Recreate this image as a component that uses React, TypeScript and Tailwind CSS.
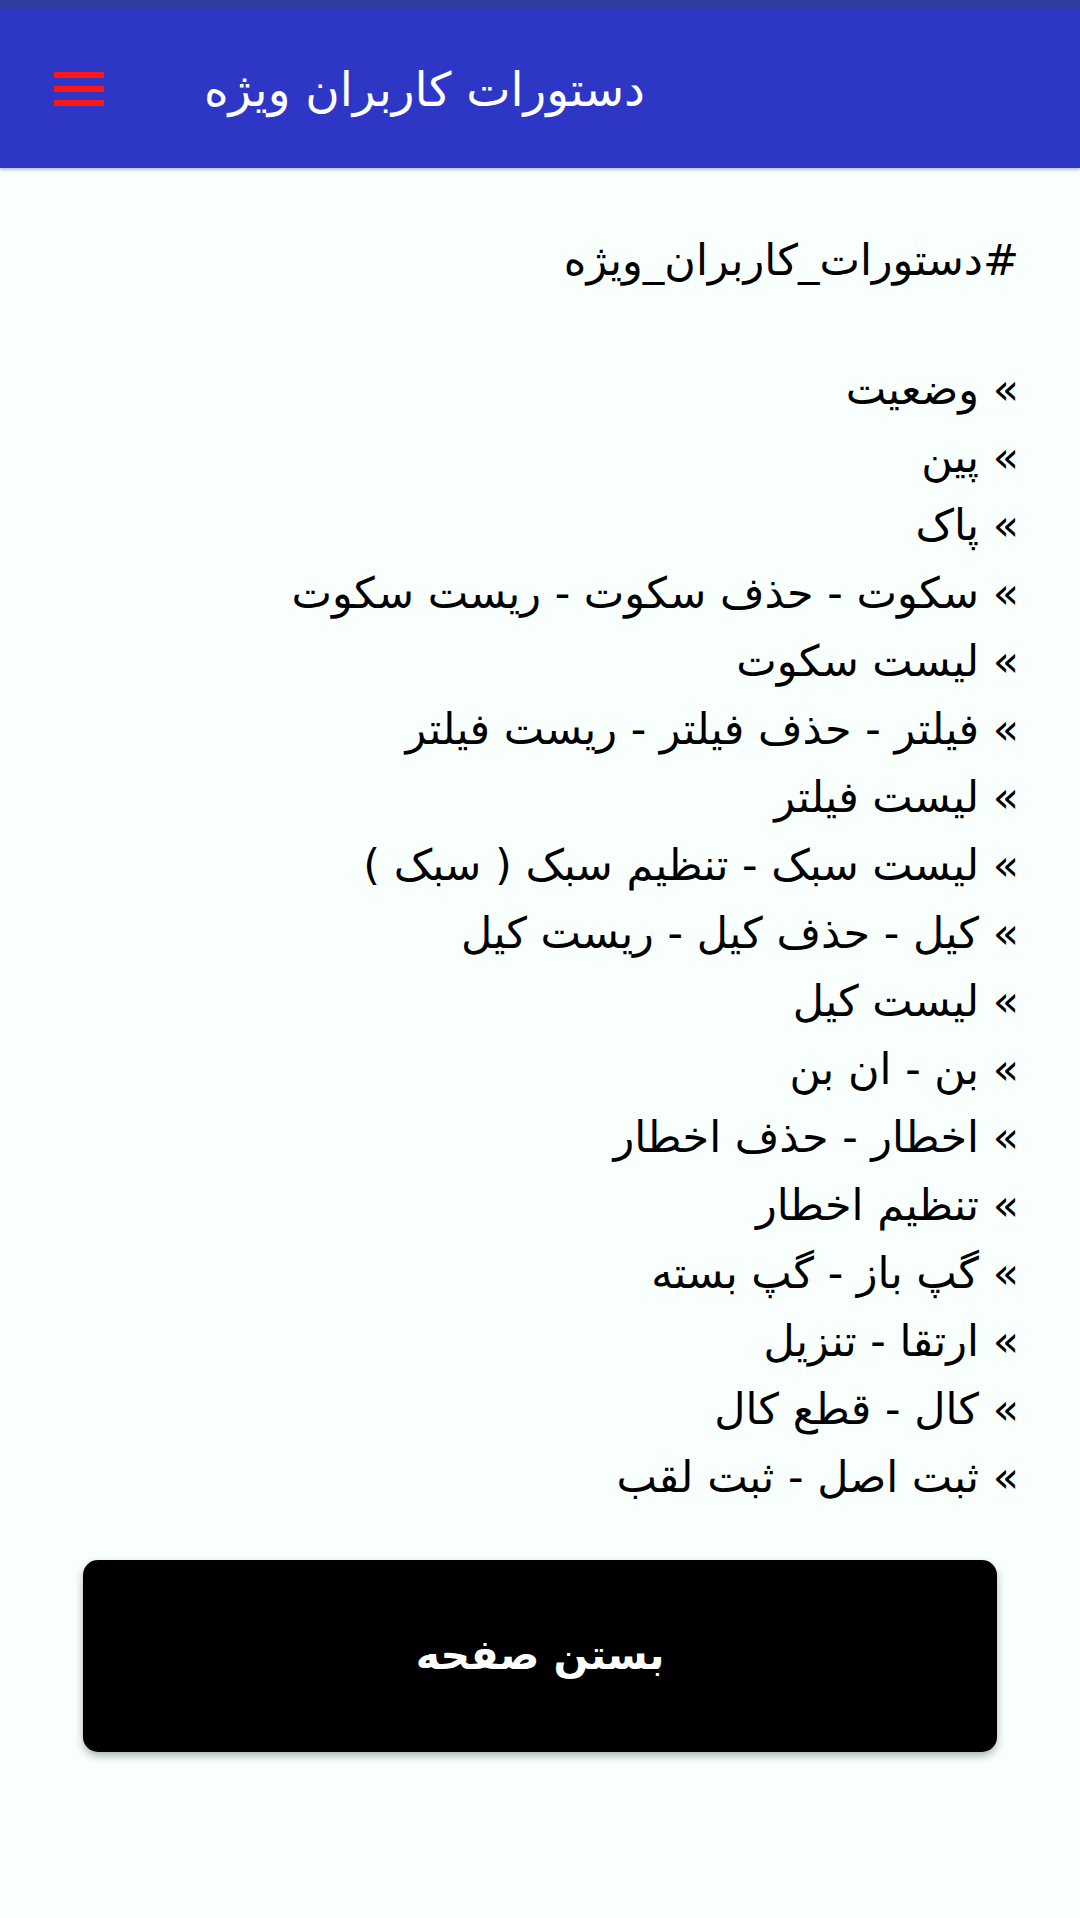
import React from "react";

const items = [
  "» وضعیت",
  "» پین",
  "» پاک",
  "» سکوت - حذف سکوت - ریست سکوت",
  "» لیست سکوت",
  "» فیلتر - حذف فیلتر - ریست فیلتر",
  "» لیست فیلتر",
  "» لیست سبک - تنظیم سبک ( سبک )",
  "» کیل - حذف کیل - ریست کیل",
  "» لیست کیل",
  "» بن - ان بن",
  "» اخطار - حذف اخطار",
  "» تنظیم اخطار",
  "» گپ باز - گپ بسته",
  "» ارتقا - تنزیل",
  "» کال - قطع کال",
  "» ثبت اصل - ثبت لقب",
];

export default function App() {
  return (
    <div
      className="w-[1080px] min-h-[1918px] bg-[#f9fffc] flex flex-col"
      style={{ fontFamily: '"DejaVu Sans", "Noto Sans", sans-serif' }}
    >
      <div className="h-[10px] bg-[#2f3e9e]" />
      <header className="h-[158px] bg-[#2e37c5] flex items-center shadow-[0_2px_3px_rgba(60,80,160,0.35)]" dir="ltr">
        <div className="ml-[54px] w-[50px] flex flex-col gap-[8px]">
          <div className="h-[6px] bg-[#ff1616]" />
          <div className="h-[6px] bg-[#ff1616]" />
          <div className="h-[6px] bg-[#ff1616]" />
        </div>
        <h1 dir="rtl" className="ml-[100px] text-white text-[47px] leading-none font-normal">
          دستورات کاربران ویژه
        </h1>
      </header>
      <main dir="rtl" className="flex flex-col pr-[61px] pt-[58px] text-black">
        <p className="text-[43px] leading-[68px] text-right">#دستورات_کاربران_ویژه</p>
        <ul className="mt-[61px] flex flex-col">
          {items.map((t, i) => (
            <li key={i} className="text-[43px] leading-[68px] text-right">
              {t}
            </li>
          ))}
        </ul>
      </main>
      <div className="px-[83px] mt-[49px]">
        <button className="w-full h-[192px] bg-black rounded-[15px] shadow-[0_4px_8px_rgba(0,0,0,0.3)] flex items-center justify-center">
          <span dir="rtl" className="text-white text-[41px] font-bold">
            بستن صفحه
          </span>
        </button>
      </div>
    </div>
  );
}
